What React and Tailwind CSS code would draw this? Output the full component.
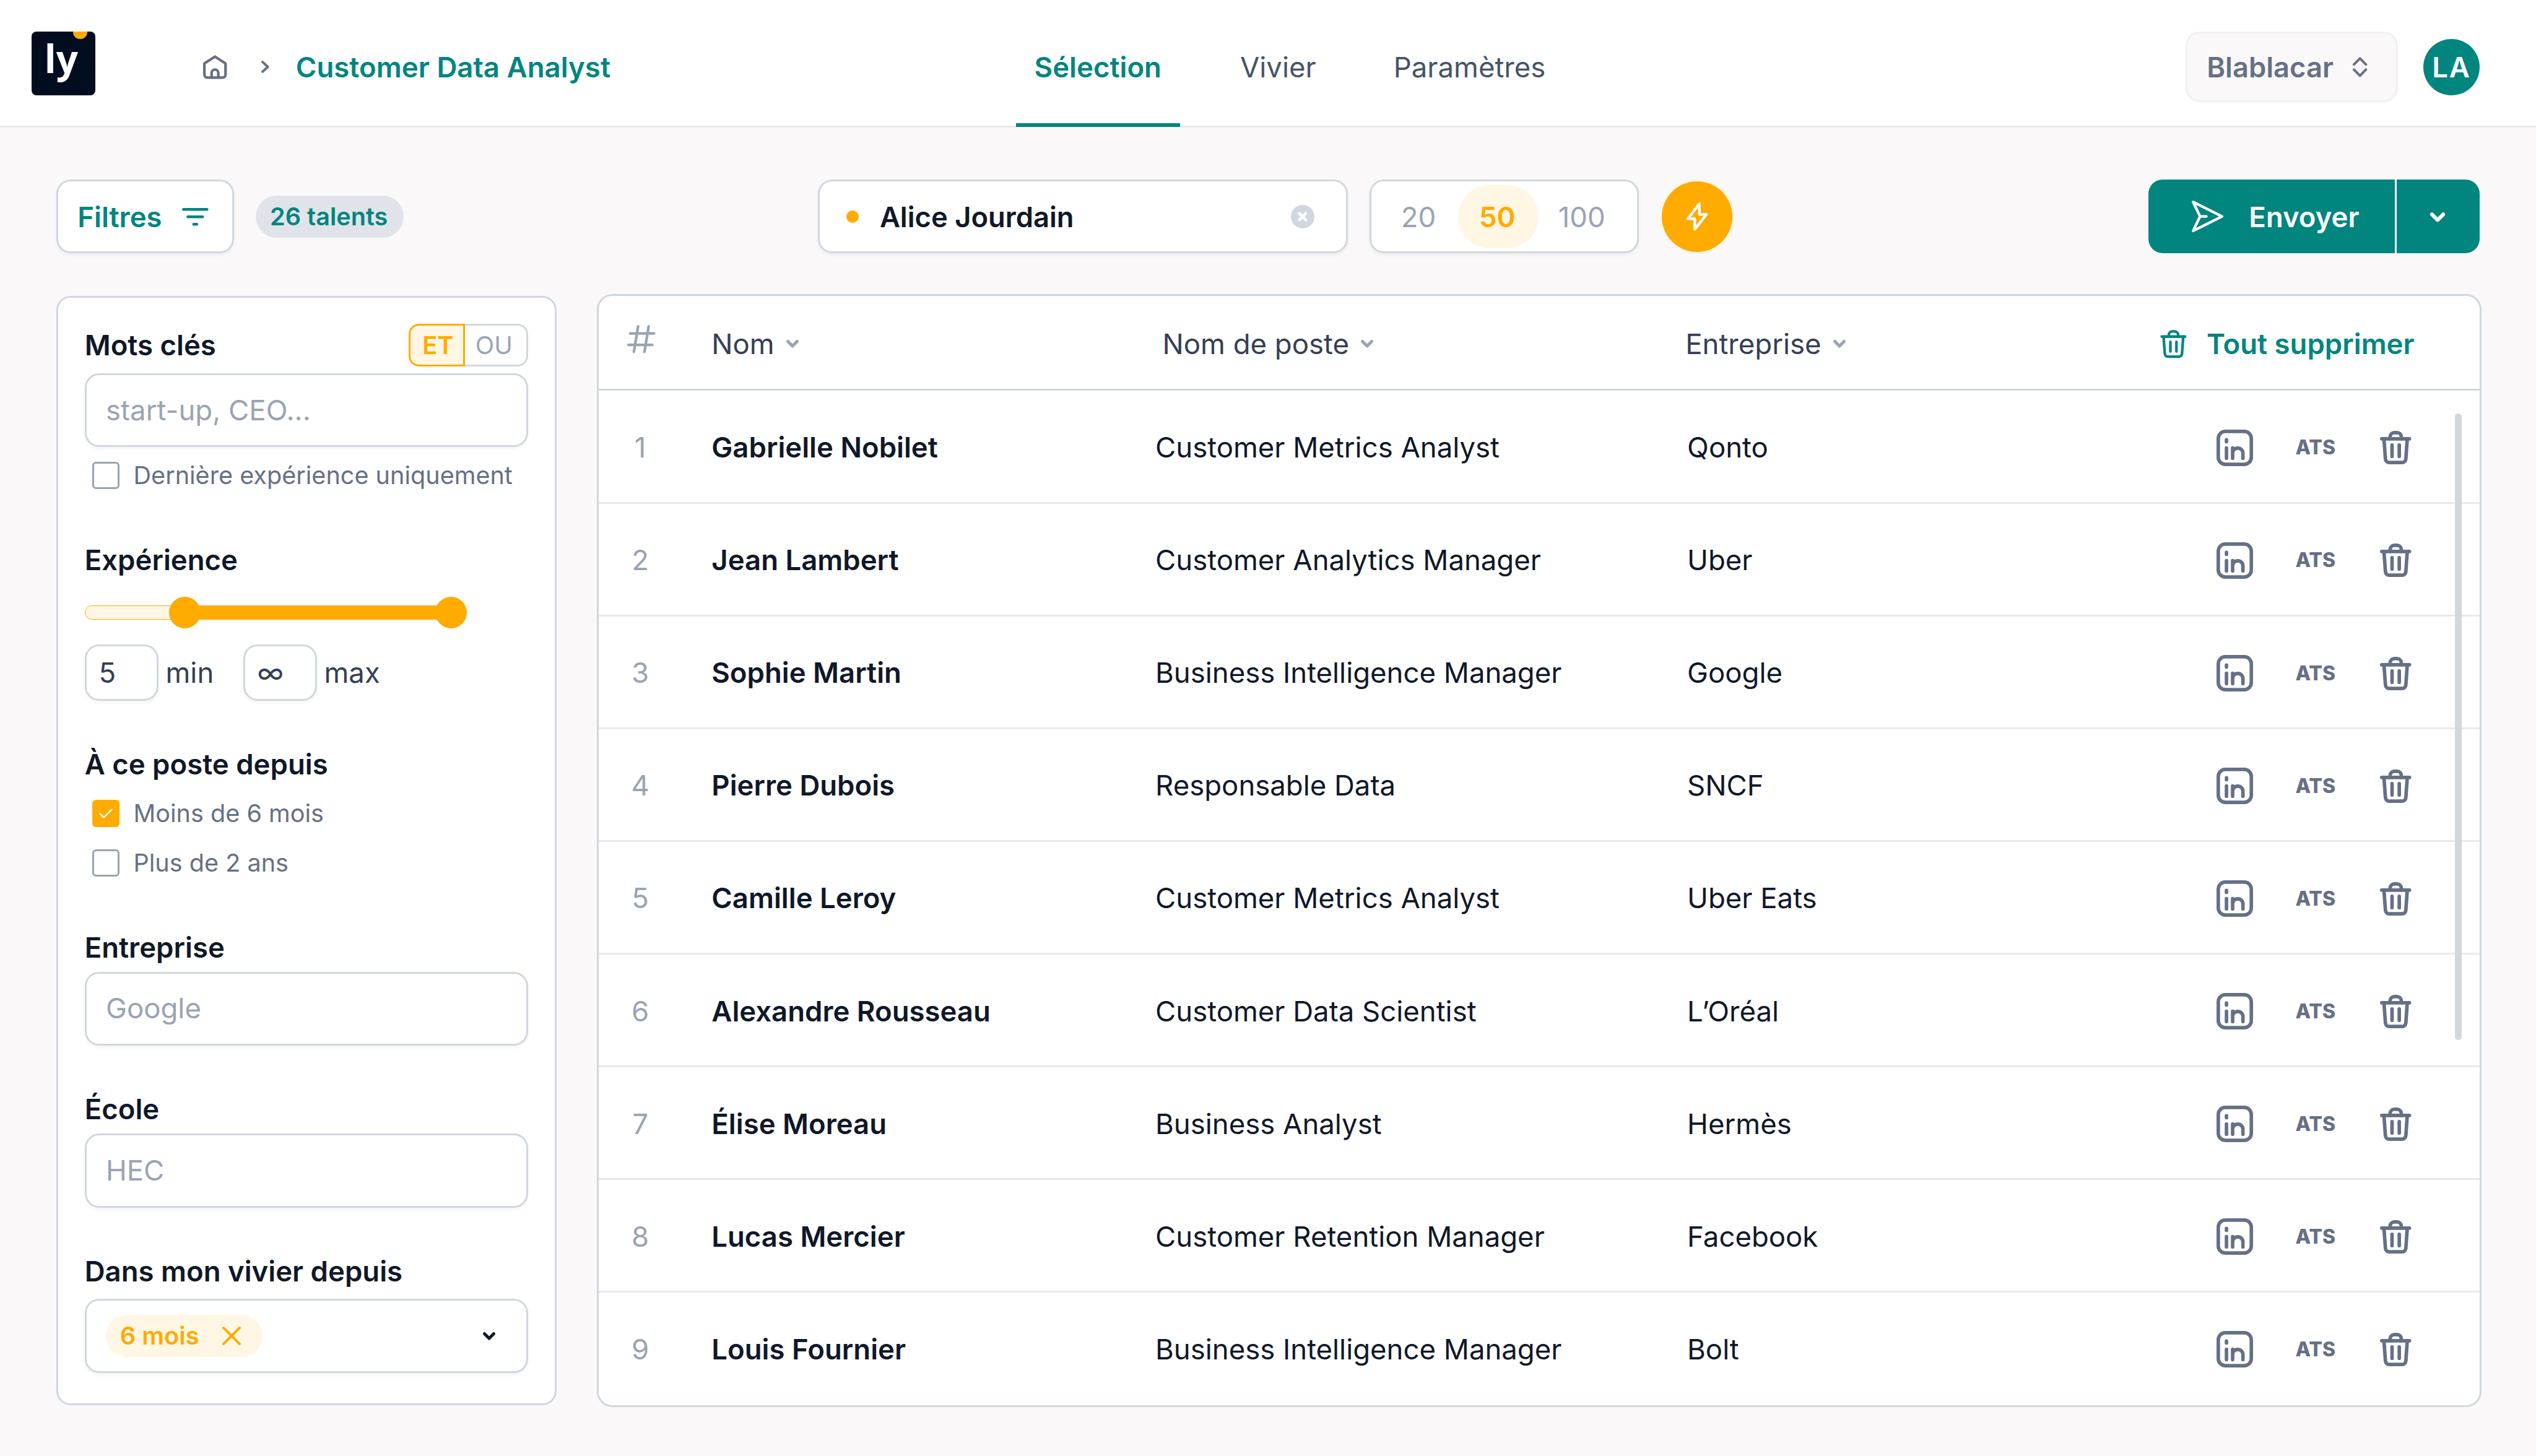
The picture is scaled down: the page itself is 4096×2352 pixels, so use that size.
import React from "react";

const Svg = ({ className, vb, sw = 1.5, children }) => (
  <svg className={`block shrink-0 overflow-visible ${className}`} viewBox={vb} fill="none" stroke="currentColor" strokeWidth={sw} strokeLinecap="round" strokeLinejoin="round">
    {children}
  </svg>
);

const ChevronDown = ({ className, w = 2 }) => (
  <Svg className={className} vb="0 0 8 5" sw={w}>
    <path d="M1 1l3 3 3-3" />
  </Svg>
);

const Trash = ({ className, w }) => (
  <Svg className={className} vb="0 0 17.75 19" sw={w}>
    <path d="M1 4.5h15.75" />
    <path d="M2.25 4.5L3.1 15.9c.1 1.2.9 2.1 2.2 2.1h7.2c1.3 0 2.1-.9 2.2-2.1l.8-11.4" />
    <path d="M5.75 4.5V3.4C5.75 2 6.9 1 8.2 1h1.5c1.3 0 2.4 1 2.4 2.4v1.1" />
    <path d="M6.85 8v6.5M10.95 8v6.5" />
  </Svg>
);

const LinkedIn = () => (
  <Svg className="h-20.75 w-20.75" vb="0 0 20.75 20.75" sw={2}>
    <rect x="1" y="1" width="18.75" height="18.75" rx="4" />
    <path d="M5.65 5.75v1.1M5.65 10.4v5.85M9.15 10.4v5.85M9.15 13.4a2.92 2.92 0 0 1 5.85 0v2.85" />
  </Svg>
);

const field = "flex items-center rounded-[23px] border-[3px] border-[#d0d7df] bg-white shadow-[0_3px_6px_rgba(16,24,40,0.05)]";

const Label = ({ children }) => <h2 className="text-[45.5px] leading-[68px] font-semibold text-[#101828]">{children}</h2>;

const Check = ({ checked, children }) => (
  <label className="flex h-16 items-center gap-8 pl-4.25">
    {checked ? (
      <span className="flex h-[44px] w-[44px] items-center justify-center rounded-[6px] bg-[#ffab00] text-white">
        <Svg className="h-[16px] w-[22px]" vb="0 0 8 5.6" sw={0.9}>
          <path d="M.5 2.9l2.3 2.2L7.5.5" />
        </Svg>
      </span>
    ) : (
      <span className="h-[44px] w-[44px] rounded-[6px] border-[3px] border-[#9aa4b2] bg-white" />
    )}
    <span className="pt-0.5 text-[39.6px] whitespace-nowrap text-[#667085]">{children}</span>
  </label>
);

const rows = [
  ["Gabrielle Nobilet", "Customer Metrics Analyst", "Qonto"],
  ["Jean Lambert", "Customer Analytics Manager", "Uber"],
  ["Sophie Martin", "Business Intelligence Manager", "Google"],
  ["Pierre Dubois", "Responsable Data", "SNCF"],
  ["Camille Leroy", "Customer Metrics Analyst", "Uber Eats"],
  ["Alexandre Rousseau", "Customer Data Scientist", "L’Oréal"],
  ["Élise Moreau", "Business Analyst", "Hermès"],
  ["Lucas Mercier", "Customer Retention Manager", "Facebook"],
  ["Louis Fournier", "Business Intelligence Manager", "Bolt"],
];

function Header() {
  return (
    <header className="grid h-[206px] grid-cols-[1641px_1fr_auto] border-b-[3px] border-[#e7eaee] bg-white">
      <div className="flex items-start pt-18 pl-18">
        <div className="relative h-36 w-36 overflow-hidden rounded-[8px] bg-[#000d1f] text-white">
          <span className="absolute -top-3.75 left-23.5 h-8 w-8 rounded-full bg-[#ffab00]" />
          <span className="absolute top-4.25 left-7.25 font-['Open_Sans',sans-serif] text-[62px] leading-[62px] font-bold">ly</span>
        </div>
        <div className="flex h-40 items-center pl-61.25">
          <Svg className="h-13.5 w-13.5 text-[#667085]" vb="0 0 13.5 13.5" sw={1.5}>
            <path d="M.75 4.75v6.3c0 1 .7 1.7 1.7 1.7h8.6c1 0 1.7-.7 1.7-1.7v-6.3l-6-3.9zM4.85 12.6v-2.45a1.9 1.9 0 0 1 3.8 0v2.45" />
          </Svg>
          <Svg className="ml-19.75 h-7 w-4.5 text-[#667085]" vb="0 0 4.5 7" sw={1.4}>
            <path d="M.75.75l3 2.75-3 2.75" />
          </Svg>
          <span className="ml-15 pt-0.5 text-[45.6px] font-semibold whitespace-nowrap text-[#00857f]">Customer Data Analyst</span>
        </div>
      </div>
      <nav className="flex h-[205px] items-stretch text-[45.5px] leading-[68px] text-[#475467]">
        <span className="flex w-93 justify-center border-b-[6px] border-[#00857f] pt-26.5 font-semibold text-[#00857f]">Sélection</span>
        <span className="pt-26.5 pl-34.25">Vivier</span>
        <span className="pt-26.5 pl-44">Paramètres</span>
      </nav>
      <div className="flex items-start pt-18 pr-32">
        <div className="flex h-40 w-120.75 items-center justify-between rounded-[23px] border-[3px] border-[#f0f1f3] bg-[#faf8f9] pr-16.5 pl-11 text-[45.3px] font-semibold text-[#667085]">
          <span className="pt-0.5">Blablacar</span>
          <Svg className="h-11.5 w-8.25" vb="0 0 8.25 11.5" sw={1.4}>
            <path d="M.7 4.3L4.1.8l3.4 3.5M.7 7.2l3.4 3.5 3.4-3.5" />
          </Svg>
        </div>
        <div className="mt-4 ml-14.25 flex h-32 w-32 items-center justify-center rounded-full bg-[#00857f] pt-0.5 text-[45.5px] font-semibold tracking-[0.04em] text-white">LA</div>
      </div>
    </header>
  );
}

function Toolbar() {
  return (
    <div className="flex h-42 items-center">
      <button className={`${field} h-42 w-101 justify-between pr-13.5 pl-11 text-[45.5px] font-semibold text-[#00857f]`}>
        <span className="pt-0.75">Filtres</span>
        <Svg className="h-10 w-15" vb="0 0 15 10" sw={1.6}>
          <path d="M.8.8h13.4M3.3 5h8.4M6.6 9.2h1.8" />
        </Svg>
      </button>
      <span className="ml-12.25 flex h-24 w-84 items-center justify-center rounded-full bg-[#e0e4ea] pt-0.75 pr-1 text-[39.6px] font-semibold text-[#00857f]">26 talents</span>
      <div className={`${field} ml-235.25 h-42 w-301 pr-18 pl-15`}>
        <span className="h-7 w-7 rounded-full bg-[#ffab00]" />
        <span className="ml-12 flex-1 pt-0.75 text-[45.3px] font-semibold text-[#101828]">Alice Jourdain</span>
        <span className="flex h-13.5 w-13.5 items-center justify-center rounded-full bg-[#d0d7df] text-white">
          <Svg className="h-5.5 w-5.5" vb="0 0 5.5 5.5" sw={1.6}>
            <path d="M.9.9l3.7 3.7M4.6.9L.9 4.6" />
          </Svg>
        </span>
      </div>
      <div className={`${field} ml-12.25 h-42 w-152.75 text-[45.5px] text-[#9aa4b2]`}>
        <span className="w-49 pt-0.75 pl-16.75">20</span>
        <span className="flex h-36 w-46 items-center justify-center rounded-full bg-[#fff6e3] pt-0.75 pr-1.25 font-semibold text-[#ffab00]">50</span>
        <span className="pt-0.75 pl-11">100</span>
      </div>
      <button className="ml-13.25 flex h-40 w-40 items-center justify-center rounded-full bg-[#ffab00] text-white shadow-[0_0_0_3px_#fff6e3]">
        <Svg className="h-16 w-12" vb="0 0 12 16" sw={1.5}>
          <path d="M7.3.75L.75 9.3H4.7v5.95l6.6-8.45h-4z" />
        </Svg>
      </button>
      <div className="ml-auto flex h-42 w-188 overflow-hidden rounded-[23px] bg-[#00857f] text-white">
        <div className="flex w-141 items-center border-r-[3px] border-white pl-24.5 text-[45.5px] font-semibold">
          <Svg className="h-18 w-18" vb="0 0 18 18" sw={1.5}>
            <path d="M.8.8L17.2 9 .8 17.2 4.7 9zM4.7 9h3.6" />
          </Svg>
          <span className="ml-14.5 pt-0.75">Envoyer</span>
        </div>
        <div className="flex flex-1 items-center justify-center pt-0.75 pr-0.75">
          <ChevronDown className="h-5.5 w-8.5" />
        </div>
      </div>
    </div>
  );
}

function Sidebar() {
  return (
    <aside className="mt-1 flex h-630 w-284 shrink-0 flex-col rounded-[23px] border-[3px] border-[#d0d7df] bg-white px-15 pt-15 text-[45.5px]">
      <div className="flex h-24 items-center justify-between">
        <Label>Mots clés</Label>
        <div className="flex h-24 w-68 text-[39.8px]">
          <span className="flex w-32 items-center justify-center rounded-l-[17px] border-[3px] border-[#ffab00] bg-[#fff6e3] pl-1.5 font-semibold text-[#ffab00]">ET</span>
          <span className="flex w-36 items-center rounded-r-[17px] border-y-[3px] border-r-[3px] border-[#d0d7df] pl-6 text-[#9aa4b2]">OU</span>
        </div>
      </div>
      <div className={`${field} mt-4 h-42 shrink-0 px-11 text-[#9aa4b2]`}>start-up, CEO...</div>
      <div className="mt-8">
        <Check>Dernière expérience uniquement</Check>
      </div>
      <div className="mt-28.25">
        <Label>Expérience</Label>
      </div>
      <div className="mt-8.75 flex h-18 w-217 items-center">
        <div className="h-8 w-52 rounded-l-full border-[1.5px] border-[#ffab00] bg-[#fff6e3]" />
        <div className="-ml-4 h-18 w-18 rounded-full bg-[#ffab00]" />
        <div className="-mx-4 h-8 flex-1 bg-[#ffab00]" />
        <div className="h-18 w-18 rounded-full bg-[#ffab00]" />
      </div>
      <div className="mt-9 flex h-32 items-center text-[#344054]">
        <div className={`${field} h-32 w-42 pt-0.75 pl-7`}>5</div>
        <span className="ml-4 w-44 pt-0.75">min</span>
        <div className={`${field} h-32 w-42 pt-0.75 pl-7`}>∞</div>
        <span className="ml-4 pt-0.75">max</span>
      </div>
      <div className="mt-24.25">
        <Label>À ce poste depuis</Label>
      </div>
      <div className="mt-8">
        <Check checked>Moins de 6 mois</Check>
      </div>
      <div className="mt-12">
        <Check>Plus de 2 ans</Check>
      </div>
      <div className="mt-28.25">
        <Label>Entreprise</Label>
      </div>
      <div className={`${field} mt-1.75 h-42 shrink-0 px-11 text-[#9aa4b2]`}>Google</div>
      <div className="mt-24.25">
        <Label>École</Label>
      </div>
      <div className={`${field} mt-1.75 h-42 shrink-0 px-11 text-[#9aa4b2]`}>HEC</div>
      <div className="mt-24.25">
        <Label>Dans mon vivier depuis</Label>
      </div>
      <div className={`${field} mt-3.75 h-42 shrink-0 justify-between pr-17.5 pl-11`}>
        <span className="flex h-24 w-89 items-center justify-between rounded-full bg-[#fff6e3] pr-12.5 pl-8 text-[39.8px] font-semibold whitespace-nowrap text-[#ffab00]">
          6 mois
          <Svg className="h-10.5 w-10.5" vb="0 0 10.5 10.5" sw={1.4}>
            <path d="M.7.7l9.1 9.1M9.8.7L.7 9.8" />
          </Svg>
        </span>
        <ChevronDown className="h-[12.5px] w-[20px] text-[#101828]" />
      </div>
    </aside>
  );
}

const HeadCell = ({ children, className }) => (
  <span className={`flex items-center gap-6.75 text-[#344054] ${className}`}>
    {children}
    <ChevronDown className="h-[12.5px] w-[20px] text-[#9aa4b2]" />
  </span>
);

function Table() {
  return (
    <section className="relative h-632 w-1070 shrink-0 overflow-hidden rounded-[25px] border-[3px] border-[#d0d7df] bg-white text-[45.5px] text-[#101828]">
      <div className="flex h-54 items-center border-b-[3px] border-[#d0d7df] pt-1.75">
        <div className="w-64 pb-5.5 pl-16">
          <Svg className="h-16 w-16 text-[#9aa4b2]" vb="0 0 16 16" sw={1.5}>
            <path d="M1.7 4.8h13.6M.7 11.3h13.6M6.2.75L3.8 15.25M12.2.75L9.8 15.25" />
          </Svg>
        </div>
        <HeadCell className="w-256">Nom</HeadCell>
        <HeadCell className="w-297">Nom de poste</HeadCell>
        <HeadCell className="flex-1">Entreprise</HeadCell>
        <button className="flex items-center gap-11.5 pr-37 font-semibold text-[#00857f]">
          <Trash className="h-16 w-15" w={1.8} />
          Tout supprimer
        </button>
      </div>
      {rows.map(([name, job, company], i) => (
        <div key={name} className="flex h-64 items-center border-b-[3px] border-[#e7eaee] pt-1.75 last-of-type:border-white">
          <span className="mr-17 w-47 text-center text-[#9aa4b2]">{i + 1}</span>
          <span className="w-252 font-semibold">{name}</span>
          <span className="w-302">{job}</span>
          <span className="flex-1">{company}</span>
          <div className="flex w-149.5 items-center text-[#667085]">
            <LinkedIn />
            <span className="w-72.25 pl-24.25 text-[32px] font-extrabold">ATS</span>
            <Trash className="h-19 w-17.75" w={2} />
          </div>
        </div>
      ))}
      <span className="absolute top-67 right-10 h-355.5 w-4 rounded-full bg-[#d0d7df]" />
    </section>
  );
}

export default function App() {
  return (
    <div className="h-[2352px] w-[4096px] overflow-hidden bg-[#faf8f9] font-[Inter,sans-serif] [--spacing:2.84444px]">
      <Header />
      <main className="px-32 pt-[84px]">
        <Toolbar />
        <div className="mt-23 flex gap-23">
          <Sidebar />
          <Table />
        </div>
      </main>
    </div>
  );
}
